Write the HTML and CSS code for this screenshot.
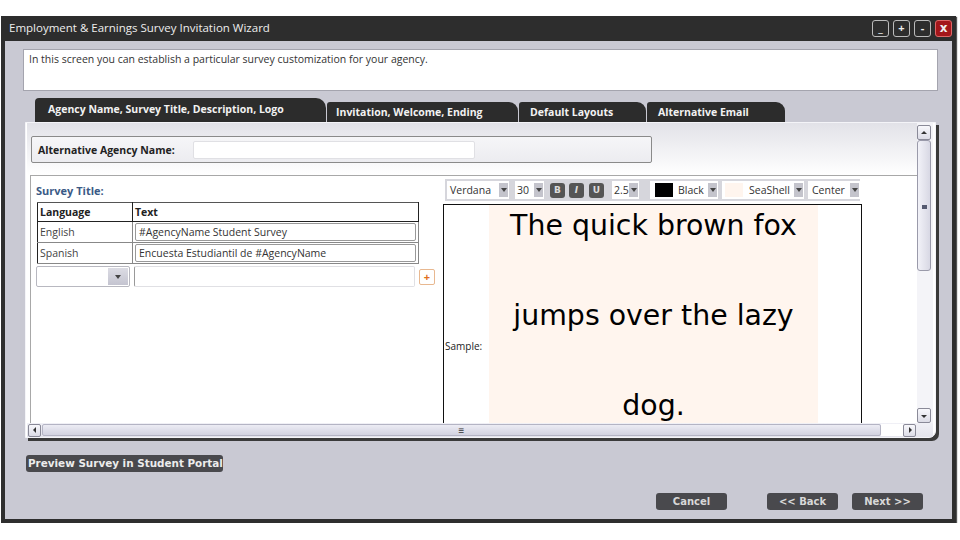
FILE: index.html
```html
<!DOCTYPE html>
<html lang="en">
<head>
    <meta charset="UTF-8">
    <title>Employment &amp; Earnings Survey Invitation Wizard</title>
    <link rel="stylesheet" href="styles.css">
</head>
<body>
    <div class="window">
        <div class="titlebar">
            <span class="title">Employment &amp; Earnings Survey Invitation Wizard</span>
            <div class="win-btns">
                <span class="win-btn">_</span>
                <span class="win-btn">+</span>
                <span class="win-btn">-</span>
                <span class="win-btn close">x</span>
            </div>
        </div>

        <div class="info">In this screen you can establish a particular survey customization for your agency.</div>

        <div class="tabs">
            <div class="tab active">Agency Name, Survey Title, Description, Logo</div>
            <div class="tab tab-2">Invitation, Welcome, Ending</div>
            <div class="tab tab-3">Default Layouts</div>
            <div class="tab tab-4">Alternative Email</div>
        </div>

        <div class="panel">
            <div class="viewport">
                <div class="top-section">
                    <div class="alt-box">
                        <label>Alternative Agency Name:</label>
                        <div class="alt-input"></div>
                    </div>
                </div>

                <div class="lower">
                    <div class="left-pane">
                        <div class="section-title">Survey Title:</div>
                        <table class="lang-table">
                            <tr>
                                <th class="col-lang">Language</th>
                                <th>Text</th>
                            </tr>
                            <tr>
                                <td>English</td>
                                <td><div class="cell-input">#AgencyName Student Survey</div></td>
                            </tr>
                            <tr>
                                <td>Spanish</td>
                                <td><div class="cell-input">Encuesta Estudiantil de #AgencyName</div></td>
                            </tr>
                        </table>
                        <div class="new-row">
                            <div class="combo"><span class="combo-arrow"></span></div>
                            <div class="new-text"></div>
                            <div class="add-btn">+</div>
                        </div>
                    </div>

                    <div class="right-pane">
                        <div class="toolbar">
                            <div class="dd dd-font">Verdana<span class="dd-arrow"></span></div>
                            <div class="dd dd-size">30<span class="dd-arrow"></span></div>
                            <span class="fmt">B</span>
                            <span class="fmt italic">I</span>
                            <span class="fmt">U</span>
                            <div class="dd dd-spacing">2.5<span class="dd-arrow"></span></div>
                            <div class="dd dd-color"><span class="swatch black"></span>Black<span class="dd-arrow"></span></div>
                            <div class="dd dd-bg"><span class="swatch seashell"></span>SeaShell<span class="dd-arrow"></span></div>
                            <div class="dd dd-align">Center<span class="dd-arrow"></span></div>
                        </div>
                        <div class="sample">
                            <span class="sample-label">Sample:</span>
                            <div class="sample-text">
                                <span>The quick brown fox</span>
                                <span>jumps over the lazy</span>
                                <span>dog.</span>
                            </div>
                        </div>
                    </div>
                </div>
            </div>

            <div class="vscroll">
                <span class="sb-btn up"></span>
                <span class="v-thumb"><i></i></span>
                <span class="v-track"></span>
                <span class="sb-btn down"></span>
            </div>

            <div class="hscroll">
                <span class="sb-btn left"></span>
                <span class="h-thumb">&#8801;</span>
                <span class="h-track"></span>
                <span class="sb-btn right"></span>
            </div>
        </div>

        <div class="preview-row">
            <span class="dark-btn">Preview Survey in Student Portal</span>
        </div>

        <div class="footer">
            <span class="dark-btn nav-btn">Cancel</span>
            <span class="dark-btn nav-btn back">&lt;&lt; Back</span>
            <span class="dark-btn nav-btn">Next &gt;&gt;</span>
        </div>
    </div>
</body>
</html>
```

FILE: styles.css
```css
* {
    margin: 0;
    padding: 0;
    box-sizing: border-box;
}

body {
    background: #fff;
    font-family: 'Open Sans', 'Noto Sans', sans-serif;
    font-size: 10.5px;
    color: #222;
}

.window {
    margin: 16px 0 0 1px;
    width: 955px;
    height: 507px;
    background: #c9c9d3;
    border: 4px solid #2e2e2e;
    border-top: none;
    box-shadow: 1px 1px 1px #555;
}

/* title bar */
.titlebar {
    height: 25px;
    background: #2d2d2d;
    margin: 0 -4px;
    display: flex;
    align-items: center;
    justify-content: space-between;
    padding: 0 4px 2px 8px;
}

.title {
    color: #eee;
    font-size: 11.5px;
}

.win-btns {
    display: flex;
    gap: 4px;
    margin-top: 2px;
}

.win-btn {
    width: 17px;
    height: 17px;
    border: 1px solid #bbb;
    border-radius: 3px;
    color: #eee;
    font-size: 11px;
    font-weight: bold;
    line-height: 14px;
    text-align: center;
}

.win-btn.close {
    background: #a3161a;
    border-color: #d66;
    font-family: 'DejaVu Sans', sans-serif;
    font-size: 12px;
}

/* info box */
.info {
    margin: 8px 14px 0 18px;
    height: 42px;
    background: #fff;
    border: 1px solid #a4a4ae;
    padding: 2px 5px;
    color: #333;
}

/* tabs */
.tabs {
    display: flex;
    align-items: flex-end;
    margin: 7px 0 0 30px;
    height: 24px;
}

.tab {
    background: #2c2c2c;
    color: #f2f2f2;
    font-weight: bold;
    font-size: 10.5px;
    height: 20px;
    line-height: 20px;
    padding-left: 9px;
    border-radius: 3px 9px 0 0;
    margin-right: 1px;
}

.tab.active {
    width: 291px;
    height: 24px;
    line-height: 22px;
    padding-left: 13px;
    border-radius: 4px 10px 0 0;
}

.tab-2 { width: 191px; }
.tab-3 { width: 127px; padding-left: 11px; }
.tab-4 { width: 138px; padding-left: 11px; }

/* content panel */
.panel {
    margin-left: 20px;
    width: 911px;
    height: 316px;
    background: #fff;
    border: 1px solid #f4f4f8;
    border-radius: 0 0 7px 0;
    box-shadow: 3px 3px 0 #3a3a3a;
    padding: 0 2px 0 1px;
    display: grid;
    grid-template-columns: 890px 16px;
    grid-template-rows: 300px 14px;
}

.viewport {
    overflow: hidden;
}

.top-section {
    height: 52px;
    background: linear-gradient(#e2e2e8, #fff);
    padding: 13px 0 0 4px;
}

.alt-box {
    width: 621px;
    height: 27px;
    border: 1px solid #8a8a8a;
    border-radius: 2px;
    background: linear-gradient(#f6f6f8, #ececf0);
    display: flex;
    align-items: center;
    padding-left: 6px;
}

.alt-box label {
    font-weight: bold;
    width: 155px;
}

.alt-input {
    width: 282px;
    height: 18px;
    background: #fff;
    border: 1px solid #e0e0e4;
    border-radius: 2px;
}

.lower {
    margin-left: 3px;
    border-top: 1px solid #a8a8a8;
    border-left: 1px solid #a8a8a8;
    display: flex;
    height: 248px;
}

.left-pane {
    width: 412px;
    padding: 7px 0 0 5px;
}

.section-title {
    color: #3b5a86;
    font-weight: bold;
    font-size: 11px;
    height: 19px;
}

.lang-table {
    margin-left: 1px;
    width: 382px;
    border-collapse: collapse;
}

.lang-table th,
.lang-table td {
    border: 1px solid #222;
    text-align: left;
    padding: 0 2px;
    font-size: 10.5px;
    height: 21px;
}

.lang-table th {
    height: 19px;
    border-top: 1px solid #555;
}

.lang-table td {
    border-color: #888;
    border-left-color: #222;
    color: #444;
}

.col-lang {
    width: 95px;
}

.cell-input {
    border: 1px solid #999;
    border-radius: 2px;
    height: 18px;
    line-height: 16px;
    padding-left: 3px;
    color: #333;
}

.new-row {
    display: flex;
    align-items: center;
    gap: 4px;
    margin-top: 2px;
}

.combo {
    width: 94px;
    height: 21px;
    border: 1px solid #b8b8c0;
    border-radius: 2px;
    display: flex;
    justify-content: flex-end;
    padding: 1px;
}

.combo-arrow {
    width: 20px;
    background: linear-gradient(#dcdce4, #c4c4d0);
    position: relative;
}

.combo-arrow::after,
.dd-arrow::after {
    content: '';
    position: absolute;
    left: 50%;
    top: 50%;
    margin: -2px 0 0 -3px;
    border: 3px solid transparent;
    border-top: 4px solid #444;
    border-bottom: none;
}

.new-text {
    width: 281px;
    height: 21px;
    border: 1px solid #e0e0e4;
    border-left-color: #999;
    border-radius: 2px;
}

.add-btn {
    width: 16px;
    height: 16px;
    border: 1px solid #e8b890;
    border-radius: 2px;
    color: #e07020;
    font-weight: bold;
    font-size: 11px;
    line-height: 13px;
    text-align: center;
}

/* format toolbar and sample */
.right-pane {
    padding-top: 3px;
}

.toolbar {
    margin-left: 2px;
    width: 415px;
    height: 22px;
    background: #d6d6dc;
    display: flex;
    align-items: center;
    padding-left: 2px;
}

.dd {
    position: relative;
    height: 18px;
    background: #fff;
    padding: 0 12px 0 3px;
    line-height: 18px;
    color: #333;
    display: flex;
    align-items: center;
    margin-right: 6px;
    white-space: nowrap;
}

.dd-arrow {
    position: absolute;
    right: 1px;
    top: 2px;
    width: 9px;
    height: 14px;
    background: #c4c4cc;
}

.dd-arrow::after {
    margin-left: -3px;
}

.dd-font { width: 62px; }
.dd-size { width: 29px; padding-left: 2px; }
.dd-spacing { width: 27px; padding: 0 10px 0 2px; margin-right: 11px; margin-left: 4px; }
.dd-color { width: 68px; padding-left: 5px; margin-right: 4px; }
.dd-bg { width: 82px; padding-left: 3px; margin-right: 4px; }
.dd-align { width: 52px; padding-left: 4px; margin-right: 0; }

.swatch {
    width: 18px;
    height: 14px;
    margin-right: 5px;
}

.swatch.black { background: #000; }
.swatch.seashell { background: #fff5ee; margin-right: 6px; }

.fmt {
    width: 15px;
    height: 15px;
    background: #555;
    color: #ddd;
    border-radius: 3px;
    font-family: 'DejaVu Sans', sans-serif;
    font-weight: bold;
    font-size: 9px;
    line-height: 15px;
    text-align: center;
    margin-right: 4px;
}

.fmt.italic {
    font-style: italic;
    margin-right: 5px;
}

.sample {
    margin-top: 3px;
    width: 419px;
    height: 220px;
    border: 1px solid #111;
    border-bottom: none;
    display: flex;
}

.sample-label {
    width: 45px;
    padding: 134px 0 0 1px;
    font-size: 10px;
    color: #222;
}

.sample-text {
    width: 329px;
    background: #fff5ee;
    padding-top: 7px;
    display: flex;
    flex-direction: column;
    align-items: center;
    gap: 62px;
    font-family: 'DejaVu Sans', Verdana, sans-serif;
    font-size: 28.4px;
    line-height: 28px;
    color: #000;
    white-space: nowrap;
}

/* scrollbars */
.vscroll {
    display: flex;
    flex-direction: column;
    padding-top: 2px;
    background: #f4f4f8;
}

.sb-btn {
    position: relative;
    width: 14px;
    height: 15px;
    border: 1px solid #8a8a98;
    border-radius: 2px;
    background: linear-gradient(#f8f8fc, #dcdce6);
}

.sb-btn::after {
    content: '';
    position: absolute;
    left: 50%;
    top: 50%;
    border: 3px solid transparent;
}

.sb-btn.up::after { border-bottom: 3px solid #333; border-top: none; margin: -2px 0 0 -3px; }
.sb-btn.down::after { border-top: 3px solid #333; border-bottom: none; margin: -1px 0 0 -3px; }
.sb-btn.left::after { border-right: 3px solid #333; border-left: none; margin: -3px 0 0 -2px; }
.sb-btn.right::after { border-left: 3px solid #333; border-right: none; margin: -3px 0 0 -1px; }

.v-thumb {
    position: relative;
    height: 131px;
    width: 14px;
    border: 1px solid #9a9aaa;
    border-radius: 3px;
    background: linear-gradient(90deg, #f2f2f8, #d8d8e4);
}

.v-thumb i {
    position: absolute;
    left: 4px;
    top: 64px;
    width: 5px;
    height: 4px;
    background: #555a70;
}

.v-track {
    flex: 1;
}

.hscroll {
    grid-column: 1 / 3;
    display: flex;
    align-items: center;
    padding-left: 1px;
    background: linear-gradient(#f0f0f6, #e4e4ec);
}

.sb-btn.left,
.sb-btn.right {
    width: 13px;
    height: 13px;
}

.h-thumb {
    width: 839px;
    height: 12px;
    margin-left: 1px;
    border: 1px solid #b4b4c4;
    border-radius: 2px;
    background: linear-gradient(#ececf4, #d2d2e0);
    font-size: 10px;
    line-height: 10px;
    text-align: center;
    color: #333;
}

.h-track {
    width: 22px;
    height: 12px;
    background: #fff;
}

/* bottom buttons */
.dark-btn {
    display: inline-block;
    background: #49494d;
    color: #ececec;
    font-family: 'DejaVu Sans', Verdana, sans-serif;
    font-weight: bold;
    font-size: 10px;
    border-radius: 3px;
    height: 17px;
    line-height: 17px;
    text-align: center;
}

.preview-row {
    margin: 17px 0 0 21px;
}

.preview-row .dark-btn {
    padding: 0 2px;
    width: 197px;
    font-size: 10.4px;
    white-space: nowrap;
}

.footer {
    display: flex;
    justify-content: flex-end;
    gap: 14px;
    margin: 21px 29px 0 0;
}

.nav-btn {
    width: 71px;
    color: #d8d8d8;
}

.nav-btn.back {
    margin-left: 26px;
}
```
